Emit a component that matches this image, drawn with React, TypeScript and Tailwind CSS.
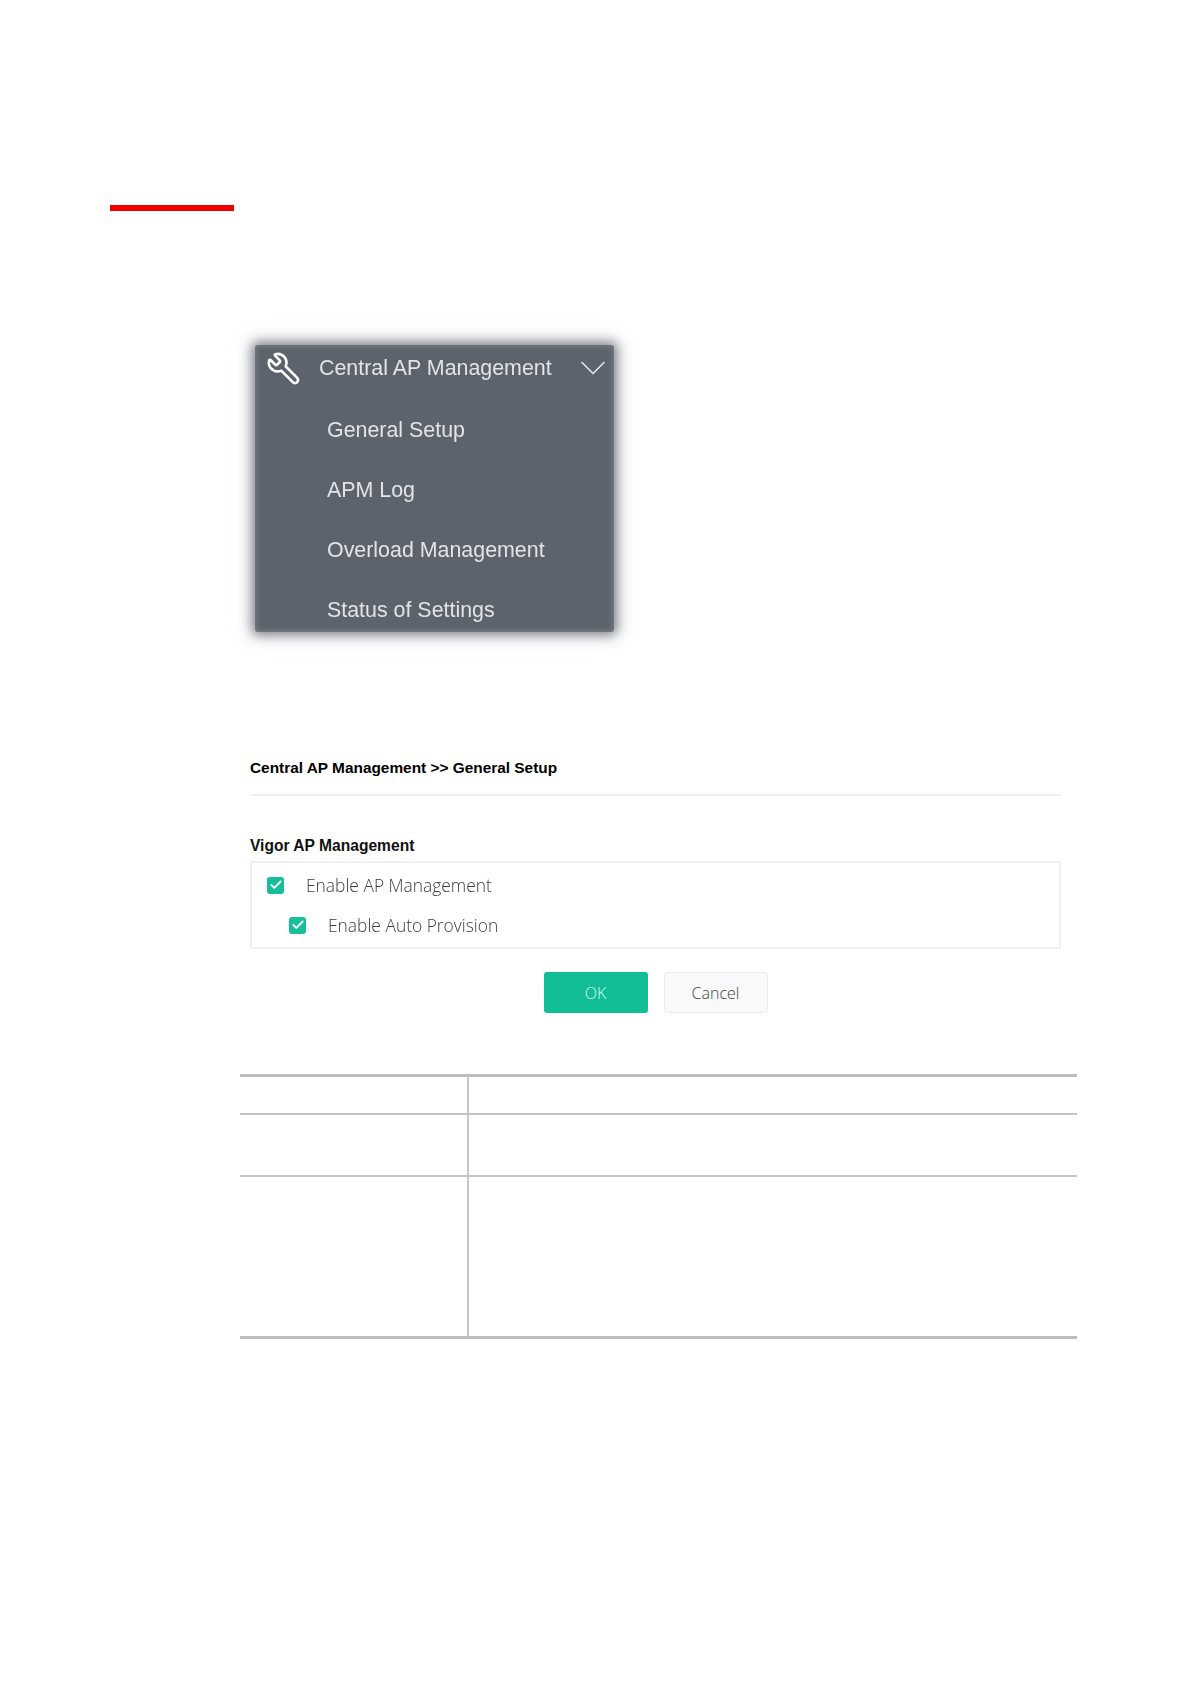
import { ChevronDown, Check, Wrench } from 'lucide-react';

const MENU_ITEMS = ['General Setup', 'APM Log', 'Overload Management', 'Status of Settings'];

function TickBox({ label, className }: { label: string; className: string }) {
  return (
    <div className={`flex items-center h-[40px] ${className}`}>
      <span className="flex items-center justify-center w-[17px] h-[17px] rounded-[3px] bg-[#17bf98]">
        <Check className="w-[14px] h-[14px] text-white" strokeWidth={3.25} />
      </span>
      <span className="ml-[22px] text-[17.4px] font-light text-[#3d3d3d] font-['Open_Sans',sans-serif] blur-[0.3px]">
        {label}
      </span>
    </div>
  );
}

function SideMenu() {
  return (
    <div className="ml-[255px] mt-[134px] w-[359px] h-[287px] rounded-[3px] bg-[#5c636c] shadow-[inset_0_0_6px_rgba(255,255,255,0.25),0_0_12px_3px_rgba(92,99,108,0.8),0_0_18px_10px_rgba(215,219,224,0.3)] text-[#e2e4e7] font-['Liberation_Sans',sans-serif] text-[21.4px] overflow-hidden">
      <div className="flex items-center h-[46px] pl-[11px]">
        <Wrench className="w-[35px] h-[35px] -scale-x-100 text-white" strokeWidth={1.8} />
        <span className="ml-[18px] blur-[0.4px]">Central AP Management</span>
        <ChevronDown className="ml-auto mr-[-2px] w-[46px] h-[44px]" strokeWidth={0.9} />
      </div>
      <div className="flex flex-col pt-[9px] pl-[72px]">
        {MENU_ITEMS.map((item) => (
          <div key={item} className="h-[60px] leading-[60px] blur-[0.4px]">
            {item}
          </div>
        ))}
      </div>
    </div>
  );
}

function SetupPanel() {
  return (
    <div className="ml-[250px] mt-[126px] w-[811px] font-['Liberation_Sans',sans-serif]">
      <div className="h-[38px] text-[15.4px] font-bold text-black leading-[20px] border-b-2 border-[#f0f0f0]">
        Central AP Management &gt;&gt; General Setup
      </div>
      <div className="mt-[40px] text-[15.6px] font-bold text-[#111] leading-[20px]">Vigor AP Management</div>
      <div className="mt-[5px] h-[88px] border-2 border-[#f0f0f0] rounded-[2px] pl-[15px] pt-[2px]">
        <TickBox label="Enable AP Management" className="" />
        <TickBox label="Enable Auto Provision" className="ml-[22px]" />
      </div>
      <div className="flex justify-center gap-[16px] mt-[23px] font-['Open_Sans',sans-serif] text-[16px] font-light">
        <button className="w-[104px] h-[41px] rounded-[3px] bg-[#10bd95] text-[#d8f5ec]">OK</button>
        <button className="w-[104px] h-[41px] rounded-[3px] border border-[#ececec] bg-[#f8f9fa] text-[#444]">Cancel</button>
      </div>
    </div>
  );
}

function EmptyTable() {
  return (
    <div className="ml-[240px] mt-[61px] w-[837px] border-y-[3px] border-[#bdbdbd]">
      <div className="grid grid-cols-[229px_1fr] h-[38px] border-b-2 border-[#c4c4c4]">
        <div className="border-r-2 border-[#c8c8c8]" />
        <div />
      </div>
      <div className="grid grid-cols-[229px_1fr] h-[62px] border-b-2 border-[#c4c4c4]">
        <div className="border-r-2 border-[#c8c8c8]" />
        <div />
      </div>
      <div className="grid grid-cols-[229px_1fr] h-[159px]">
        <div className="border-r-2 border-[#c8c8c8]" />
        <div />
      </div>
    </div>
  );
}

export default function App() {
  return (
    <div className="w-[1190px] h-[1684px] bg-white overflow-hidden pt-[205px]">
      <div className="ml-[110px] w-[124px] h-[6px] bg-[#f00000]" />
      <SideMenu />
      <SetupPanel />
      <EmptyTable />
    </div>
  );
}
